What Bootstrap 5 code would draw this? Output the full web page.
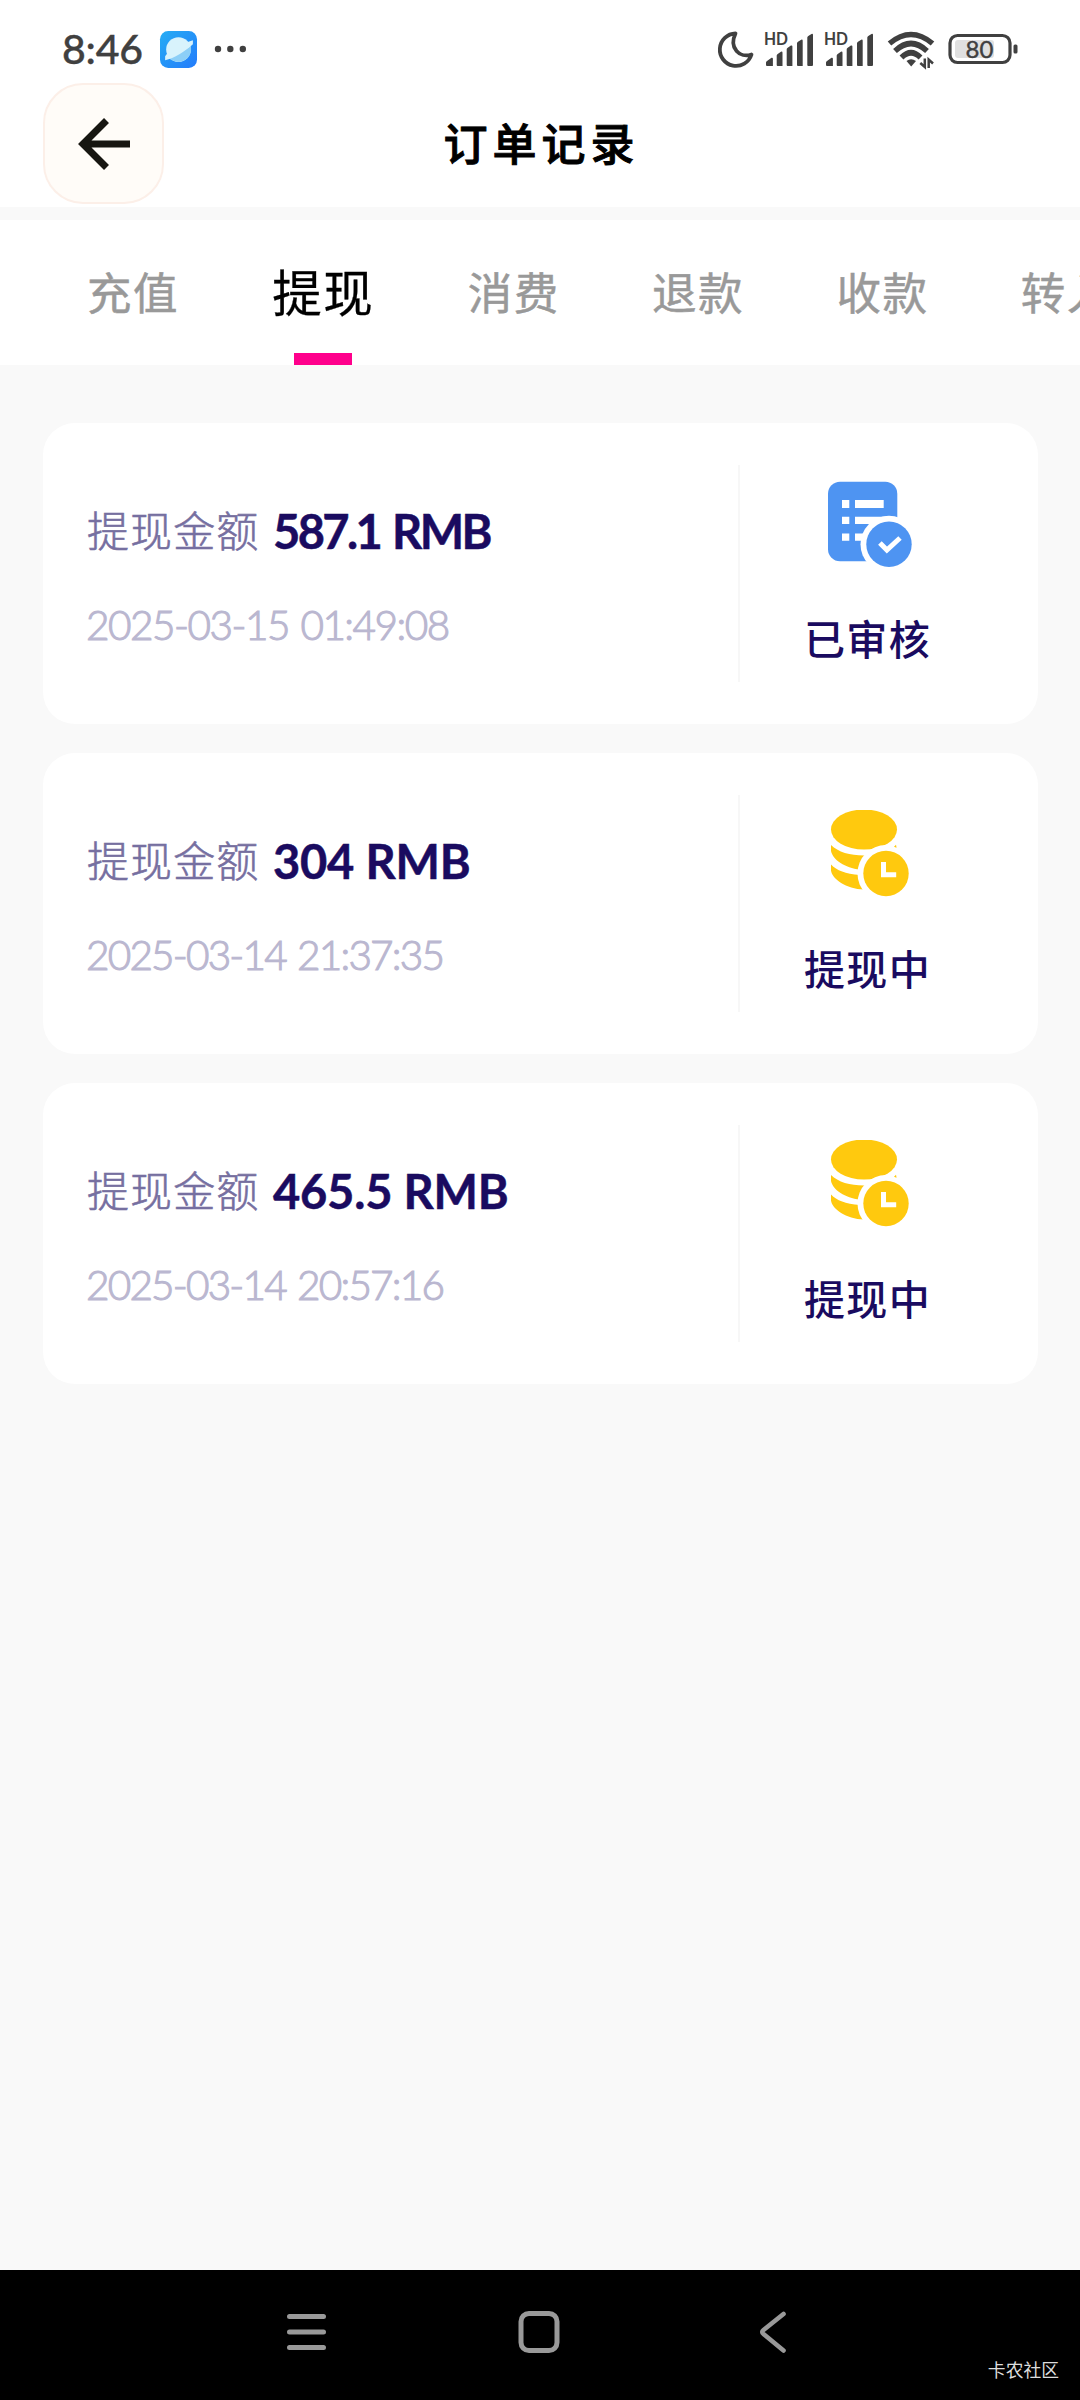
<!DOCTYPE html>
<html lang="zh-CN">
<head>
<meta charset="utf-8">
<meta name="viewport" content="width=device-width, initial-scale=1">
<title>订单记录</title>
<link href="https://cdn.jsdelivr.net/npm/bootstrap@5.3.0/dist/css/bootstrap.min.css" rel="stylesheet">
<style>
body{height:2400px;background:#f9f9f9;font-family:Lato,"Noto Sans CJK SC",sans-serif;overflow:hidden}
svg{display:block;flex:none;overflow:visible}
.status-bar{height:82px;padding:0 62px;color:#404040}
.clock{font-size:41px;line-height:50px;width:98px;letter-spacing:-.2px;font-weight:500;-webkit-text-stroke:.4px #404040}
.title-bar{height:125px;padding:1px 43px 3px}
.back-btn{width:121px;height:121px;border:2px solid #fcefe8;border-radius:40px;background:#fffcf8}
.page-title{font-size:44px;letter-spacing:5px;font-weight:500;color:#000;-webkit-text-stroke:.9px #000;line-height:60px;padding:0 2px 0 0}
.tab-strip{height:145px;margin-top:13px;padding-left:87px}
.tab-strip .nav-link{width:184.3px;flex:none;padding:0;color:#999;font-size:44.5px;letter-spacing:1.5px;line-height:146px;height:145px;-webkit-text-stroke:.5px #999;white-space:nowrap}
.tab-strip .nav-link.active{width:196.5px;padding-left:1px;color:#000;font-size:49.5px;letter-spacing:1.5px;-webkit-text-stroke:.3px #000;position:relative}
.tab-strip .nav-link.active::after{content:"";position:absolute;left:23px;bottom:0;width:58px;height:12px;background:#ff008c}
.order-list{padding:58px 42px 0 43px;gap:29px}
.order{height:301px;border:0;border-radius:32px;padding:42px 43px 42px 44px}
.order + .order{padding-top:41.5px}
.order-info{padding-top:36px}
.amount-row{height:60px;line-height:60px}
.amount-label{font-size:42px;letter-spacing:1.1px;width:186px;color:#766fa0;font-weight:300;-webkit-text-stroke:.6px #766fa0}
.amount-value{font-size:47px;font-weight:700;color:#1a0b60;-webkit-text-stroke:.5px #1a0b60;letter-spacing:-.2px}
.order:first-child .amount-value{letter-spacing:-2.6px;word-spacing:3px}
.order-time{font-size:40.5px;line-height:60px;margin-top:34px;margin-left:-1px;color:#bab7d0;font-weight:300;-webkit-text-stroke:1.1px #bab7d0;letter-spacing:-1.8px;word-spacing:2px}
.order:first-child .order-time{letter-spacing:-1.5px}
.order-state{width:257px;border-left:2px solid #f7f7f7;padding-top:15px}
.state-icon{margin-left:8px}
.state-text{font-size:41px;letter-spacing:1.3px;font-weight:500;line-height:60px;margin-top:42px;color:#1a0b60}
.nav-keys{height:130px;background:#000;padding:41px 0 0 286px;position:relative}
.watermark{position:absolute;right:21px;bottom:16px;font-size:17.8px;line-height:28px;color:#ddd}
</style>
<script defer src="https://cdn.jsdelivr.net/npm/bootstrap@5.3.0/dist/js/bootstrap.bundle.min.js"></script>
</head>
<body class="d-flex flex-column">
<svg width="0" height="0" class="position-absolute" aria-hidden="true">
  <symbol id="ic-approved" viewBox="0 0 88 88">
    <rect y="1.7" width="69.3" height="79.5" rx="12" fill="#4e94f2"/>
    <path fill="#fff" d="M14 20h7.3v8H14zM14 36.8h7.3V44H14zM14 53.4h7.3v7.3H14zM27 20h28.7v8H27zM27 36.8h28V44H27zM27 53.4h12v7.3H27z"/>
    <circle cx="61" cy="64.3" r="28.5" fill="#fff"/><circle cx="61" cy="64.3" r="22.7" fill="#4e94f2"/>
    <path d="M51.9 62.9l7 7.2L72 58" fill="none" stroke="#fff" stroke-width="5"/>
  </symbol>
  <symbol id="ic-pending" viewBox="0 0 88 88">
    <g fill="#ffc90e"><ellipse cx="36" cy="19.5" rx="33" ry="20"/>
    <path d="M3 35c7 7 19 10.500 33 10.500h4L32 59.500C17 58 5 50 3 41zM3 54.600c6 6 14 9.400 29 10.400l4 14.500C18 79 4 69 3 60.500z"/></g>
    <circle cx="58" cy="63.500" r="28.500" fill="#fff"/><path d="M66 36.800l2-2 .6 3z" fill="#ffc90e"/>
    <circle cx="58" cy="63.500" r="22.700" fill="#ffc90e"/>
    <path d="M55.500 52v12.700h12.700" fill="none" stroke="#fff" stroke-width="5"/>
  </symbol>
  <symbol id="ic-signal" viewBox="0 0 52 36">
    <path fill="#404040" d="M2 31.500q0-1 1-1.500l4.500-3.200q1.400-.5 1.400 1V35H3q-1 0-1-1zM12.700 24.500q0-1 1-1.500l3.200-2.300q1.600-.6 1.600 1V35h-4.800q-1 0-1-1zM22.700 18.200q0-1 1-1.500l3.200-2.100q1.500-.6 1.500 1V35h-4.700q-1 0-1-1zM33 12.200q0-1 1-1.500l3.200-2q1.500-.6 1.500 1V35H34q-1 0-1-1zM43.300 6.500q0-1 1-1.500l3.200-2q1.500-.6 1.500 1V34q0 1-1 1h-3.700q-1 0-1-1z"/>
  </symbol>
</svg>

<header class="bg-white">
  <div class="status-bar d-flex align-items-center pt-3">
    <div class="clock">8:46</div>
    <svg width="37" height="37" viewBox="0 0 36 36">
      <defs><linearGradient id="planet" x1="0" y1="0" x2="1" y2="1"><stop stop-color="#26adf4"/><stop offset="1" stop-color="#237bfb"/></linearGradient></defs>
      <rect width="36" height="36" rx="8" fill="url(#planet)"/><circle cx="18" cy="18" r="12" fill="#d8f3fc"/>
      <path d="M7 25C16 23 25 18 30 14.500c1.500 9-4 15-11.700 15.300-5 0-9-2.300-11.300-4.800z" fill="#8ccff7"/>
      <path d="M27 10.800l5-1.800v4C24 20 14 27 5 28.500v-4l2-2.500 2 2c8-3 14-7 18-13.200z" fill="#d8f3fc"/>
    </svg>
    <svg width="34" height="10" viewBox="0 0 34 10" class="ms-3" fill="#404040"><circle cx="5" cy="5" r="3.200"/><circle cx="17.300" cy="5" r="3.200"/><circle cx="29.800" cy="5" r="3.200"/></svg>
    <div class="d-flex align-items-center ms-auto">
      <svg width="36" height="37" viewBox="0 0 36 37" fill="none" stroke="#404040" stroke-width="3.800" stroke-linejoin="round"><path d="M17.500 2.500A16.200 16.200 0 1 0 33.500 23.500C22 27.500 10.500 17 17.500 2.500z"/></svg>
      <svg width="52" height="36" viewBox="0 0 52 36" style="margin-left:10px"><text x="0" y="13.500" font-family="Lato, sans-serif" font-weight="700" font-size="16.500" textLength="24" lengthAdjust="spacingAndGlyphs" fill="#404040">HD</text><use href="#ic-signal"/></svg>
      <svg width="52" height="36" viewBox="0 0 52 36" style="margin-left:8px"><text x="0" y="13.500" font-family="Lato, sans-serif" font-weight="700" font-size="16.500" textLength="24" lengthAdjust="spacingAndGlyphs" fill="#404040">HD</text><use href="#ic-signal"/></svg>
      <svg width="47" height="37" viewBox="0 0 47 37" style="margin-left:11px">
        <g fill="none" stroke="#404040" stroke-width="5.500"><path d="M2.500 12.500Q24 -5.500 45.500 12.500"/><path d="M8 20Q24 5 40 20"/><path d="M14.500 26.500Q24 17 33.500 26.500"/></g>
        <path d="M19.500 30q4.500-3.500 9.500 0l-4.800 5.500z" fill="#404040"/>
        <path d="M37.800 27v9M41.500 36.500v-9" fill="none" stroke="#fff" stroke-width="5"/>
        <path d="M37.800 27.500v8.500l-4.500-4M41.700 37v-8.500l4.300 4" fill="none" stroke="#404040" stroke-width="2.500"/>
      </svg>
      <svg width="70" height="32" viewBox="0 0 70 32" style="margin-left:14px">
        <rect x="2" y="2.500" width="60" height="27" rx="7.500" fill="#fff" stroke="#404040" stroke-width="3.200"/><rect x="7" y="7" width="39" height="18" rx="3" fill="#e0e0e0"/>
        <rect x="65.500" y="11.500" width="4" height="9" rx="1.500" fill="#404040"/>
        <text x="31.500" y="25" text-anchor="middle" font-family="Lato, sans-serif" font-size="24" fill="#404040" stroke="#404040" stroke-width=".4">80</text>
      </svg>
    </div>
  </div>
  <div class="title-bar d-flex align-items-center">
    <button type="button" class="back-btn d-flex align-items-center justify-content-center p-0" aria-label="返回"><svg width="54" height="52" viewBox="0 0 54 52" fill="none" stroke="#171611" stroke-width="7"><path d="M53 26H7M29.500 2.500L6 26l23.500 23.500"/></svg></button>
    <div class="page-title flex-grow-1 text-center">订单记录</div>
    <div style="width:116px"></div>
  </div>
</header>

<nav class="tab-strip nav flex-nowrap bg-white overflow-hidden flex-shrink-0">
  <a class="nav-link">充值</a><a class="nav-link active">提现</a><a class="nav-link">消费</a><a class="nav-link">退款</a><a class="nav-link">收款</a><a class="nav-link">转入</a>
</nav>

<main class="order-list d-flex flex-column flex-grow-1">
  <article class="order card flex-row">
    <div class="order-info flex-grow-1">
      <div class="amount-row d-flex"><span class="amount-label">提现金额</span><span class="amount-value">587.1 RMB</span></div>
      <div class="order-time">2025-03-15 01:49:08</div>
    </div>
    <div class="order-state d-flex flex-column align-items-center"><svg class="state-icon" width="88" height="88"><use href="#ic-approved"/></svg><div class="state-text">已审核</div></div>
  </article>
  <article class="order card flex-row">
    <div class="order-info flex-grow-1">
      <div class="amount-row d-flex"><span class="amount-label">提现金额</span><span class="amount-value">304 RMB</span></div>
      <div class="order-time">2025-03-14 21:37:35</div>
    </div>
    <div class="order-state d-flex flex-column align-items-center"><svg class="state-icon" width="88" height="88"><use href="#ic-pending"/></svg><div class="state-text">提现中</div></div>
  </article>
  <article class="order card flex-row">
    <div class="order-info flex-grow-1">
      <div class="amount-row d-flex"><span class="amount-label">提现金额</span><span class="amount-value">465.5 RMB</span></div>
      <div class="order-time">2025-03-14 20:57:16</div>
    </div>
    <div class="order-state d-flex flex-column align-items-center"><svg class="state-icon" width="88" height="88"><use href="#ic-pending"/></svg><div class="state-text">提现中</div></div>
  </article>
</main>

<footer class="nav-keys d-flex align-items-start flex-shrink-0">
  <svg width="42" height="42" viewBox="0 0 42 42" stroke="#999" stroke-width="5" stroke-linecap="round"><path d="M3.500 5.500h34M3.500 21h34M3.500 36.500h34"/></svg>
  <svg width="42" height="42" viewBox="0 0 42 42" fill="none" stroke="#999" stroke-width="5" style="margin-left:190px"><rect x="3" y="2.500" width="36" height="37" rx="8"/></svg>
  <svg width="30" height="42" viewBox="0 0 30 42" fill="none" stroke="#999" stroke-width="4.600" stroke-linecap="round" stroke-linejoin="round" style="margin-left:198px"><path d="M25.500 3L5.500 19q-2.500 2 0 4l20 16.500"/></svg>
  <div class="watermark">卡农社区</div>
</footer>
</body>
</html>
